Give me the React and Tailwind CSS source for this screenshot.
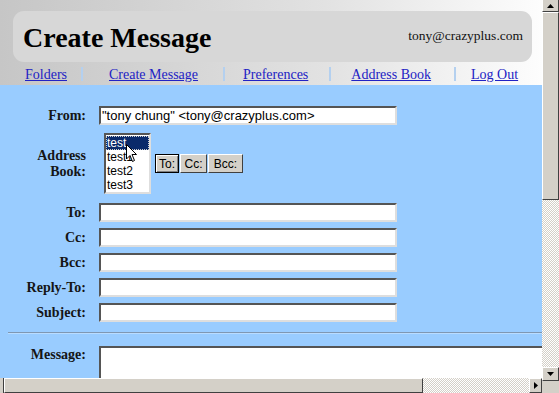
import React from 'react';

const serif = { fontFamily: '"Liberation Serif", "Times New Roman", serif' };
const sans = { fontFamily: '"Liberation Sans", Arial, sans-serif' };

const inset = 'border-2 border-t-[#555] border-l-[#555] border-b-[#dedede] border-r-[#dedede] bg-white';
const outset = 'border border-t-white border-l-white border-b-[#404040] border-r-[#404040] bg-[#d4d0c8]';
const checker = 'bg-[repeating-conic-gradient(#d4d0c8_0_25%,#ffffff_0_50%)] bg-size-[2px_2px]';

function Sep() {
  return <span className="w-[2px] h-[14px] bg-[#b4d0ef]" />;
}

function Field({ label, value }) {
  return (
    <>
      <div className="text-right font-bold text-[14px] leading-[19px] text-[#151515] self-center" style={serif}>{label}</div>
      <div className={`${inset} w-[298px] h-[19px] text-[13px] leading-[15px] pl-[1px] text-black whitespace-nowrap overflow-hidden`} style={sans}>
        {value}
      </div>
    </>
  );
}

function Arrow({ dir }) {
  const d = dir === 'up' ? 'M0 4 L3.5 0 L7 4 Z' : dir === 'down' ? 'M0 0 L7 0 L3.5 4 Z' : 'M0 0 L4 3.5 L0 7 Z';
  const w = dir === 'right' ? 4 : 7;
  const h = dir === 'right' ? 7 : 4;
  return (
    <svg width={w} height={h} viewBox={`0 0 ${w} ${h}`}>
      <path d={d} fill="#000" />
    </svg>
  );
}

export default function App() {
  const contacts = ['test', 'test1', 'test2', 'test3'];

  return (
    <div className="w-[559px] h-[393px] overflow-hidden flex bg-white">
      <div className="w-[542px] flex flex-col">
        <div className="h-[378px] overflow-hidden flex flex-col">
          {/* top header */}
          <div className="h-[85px] flex flex-col bg-linear-to-r from-[#c6c6c6] via-[#e2e2e2] via-60% to-[#fdfdfd]">
            <div className="mt-[11px] ml-[13px] w-[519px] h-[51px] rounded-[11px] bg-[#d7d7d7] flex items-center justify-between pl-[10px] pr-[9px]">
              <span className="text-[28px] font-bold text-black leading-none pt-[2px]" style={serif}>Create Message</span>
              <span className="text-[13.5px] text-[#111]" style={serif}>tony@crazyplus.com</span>
            </div>
            <nav className="flex items-center h-[23px] pl-[25px] text-[14px] pt-[1px]" style={serif}>
              <a className="underline text-[#2222c4]">Folders</a>
              <span className="ml-[14px] flex"><Sep /></span>
              <a className="ml-[26px] underline text-[#2222c4]">Create Message</a>
              <span className="ml-[25px] flex"><Sep /></span>
              <a className="ml-[18px] underline text-[#2222c4]">Preferences</a>
              <span className="ml-[21px] flex"><Sep /></span>
              <a className="ml-[20px] underline text-[#2222c4]">Address Book</a>
              <span className="ml-[23px] flex"><Sep /></span>
              <a className="ml-[15px] underline text-[#2222c4]">Log Out</a>
            </nav>
          </div>

          {/* form */}
          <div className="flex-1 bg-[#99ccff] pt-[21px] overflow-hidden">
            <div className="grid grid-cols-[86px_auto] gap-x-[13px] gap-y-[6px] justify-start">
              <Field label="From:" value={'"tony chung" <tony@crazyplus.com>'} />

              <div className="text-right font-bold text-[14px] leading-[16px] text-[#151515] self-center" style={serif}>
                Address<br />Book:
              </div>
              <div className="flex items-center gap-[4px] pl-[5px] pt-[2px] pb-[3px]">
                <div className={`${inset} relative w-[47px] h-[61px] py-[1px] text-[12px] leading-[14px]`} style={sans}>
                  {contacts.map((c, i) => (
                    <div
                      key={c}
                      className={i === 0 ? 'bg-[#0a2a6a] text-white outline-1 outline-dotted outline-[#ccc] -outline-offset-1 pl-[1px]' : 'pl-[1px] text-black'}
                    >
                      {c}
                    </div>
                  ))}
                  <svg className="absolute left-[20px] top-[9px]" width="12" height="19" viewBox="0 0 12 19">
                    <path d="M0.5 0.5 L0.5 15 L4 11.5 L6.5 17.5 L8.5 16.5 L6 10.5 L10.5 10.5 Z" fill="#fff" stroke="#000" strokeWidth="1" />
                  </svg>
                </div>
                <div className="flex gap-[1px] text-[12px] leading-none text-black" style={sans}>
                  <button className="h-[19px] w-[24px] border border-black bg-[#d4d0c8] shadow-[inset_1px_1px_0_#fff,inset_-1px_-1px_0_#808080]">To:</button>
                  <button className={`h-[19px] w-[27px] ${outset}`}>Cc:</button>
                  <button className={`h-[19px] w-[35px] ${outset}`}>Bcc:</button>
                </div>
              </div>

              <Field label="To:" value="" />
              <Field label="Cc:" value="" />
              <Field label="Bcc:" value="" />
              <Field label="Reply-To:" value="" />
              <Field label="Subject:" value="" />
            </div>

            <div className="mt-[10px] ml-[8px] h-[2px] border-t border-t-[#7f97b2] border-b border-b-[#b9dcff]" />

            <div className="grid grid-cols-[86px_auto] gap-x-[13px] mt-[12px]">
              <div className="text-right font-bold text-[14px] leading-[16px] text-[#151515] pt-[1px]" style={serif}>Message:</div>
              <div className={`${inset} w-[460px] h-[60px]`} />
            </div>
          </div>
        </div>

        {/* horizontal scrollbar */}
        <div className={`h-[15px] flex ${checker}`}>
          <div className="w-[4px] bg-[#d4d0c8] border-r border-r-[#404040]" />
          <div className={`w-[419px] ${outset}`} />
          <div className="flex-1" />
          <div className={`w-[13px] flex items-center justify-center ${outset}`}>
            <Arrow dir="right" />
          </div>
        </div>
      </div>

      {/* vertical scrollbar */}
      <div className={`w-[17px] flex flex-col ${checker}`}>
        <div className={`h-[12px] flex items-center justify-center ${outset} border-t-0`}>
          <Arrow dir="up" />
        </div>
        <div className={`h-[188px] ${outset}`} />
        <div className="flex-1" />
        <div className={`h-[14px] flex items-center justify-center ${outset}`}>
          <Arrow dir="down" />
        </div>
        <div className="h-[12px] bg-[#d4d0c8]" />
      </div>
    </div>
  );
}
